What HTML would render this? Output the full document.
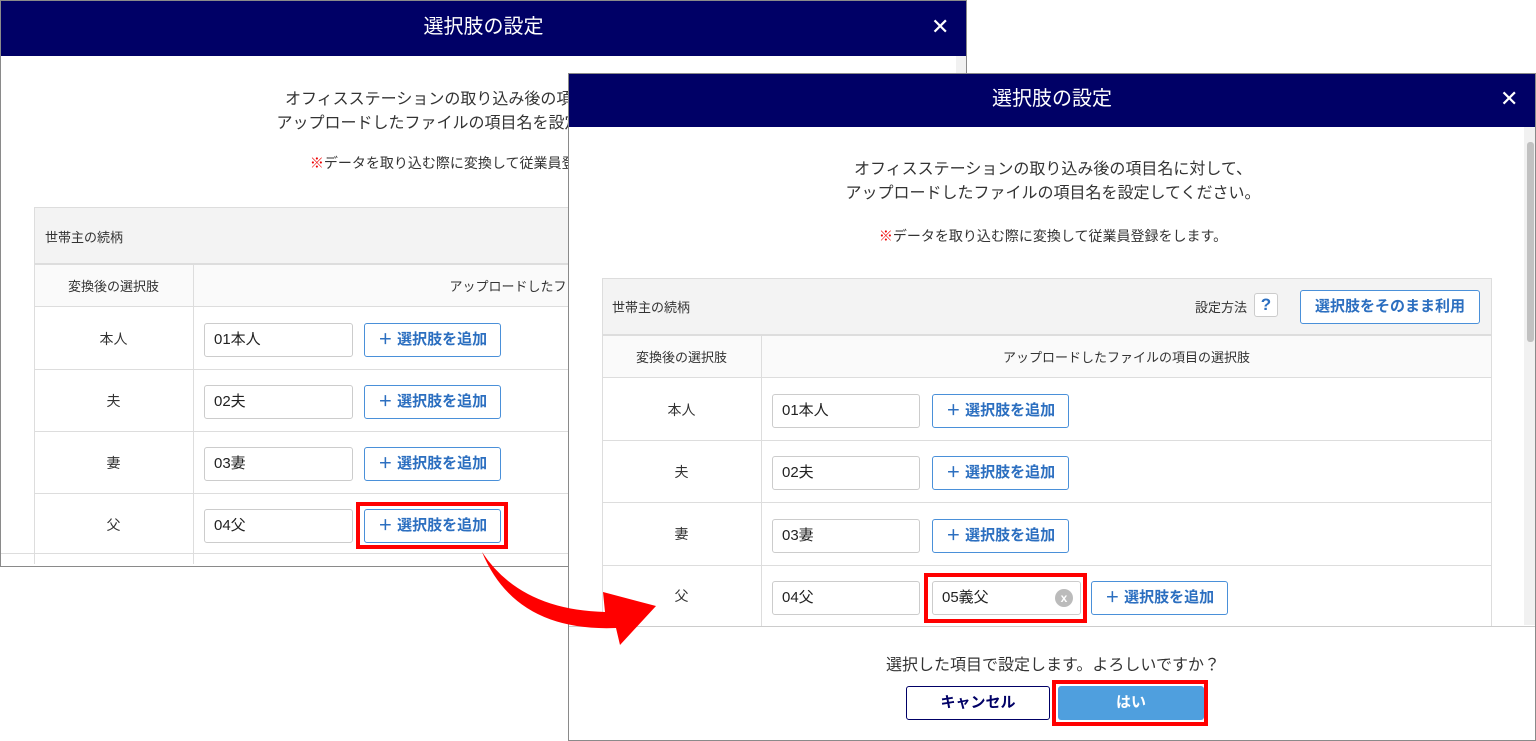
<!DOCTYPE html>
<html><head><meta charset="utf-8"><style>
*{box-sizing:border-box;margin:0;padding:0}
body{width:1536px;height:741px;background:#fff;position:relative;overflow:hidden;font-family:"Liberation Sans","Noto Sans CJK JP",sans-serif;color:#333}
.abs{position:absolute}
.dlg{position:absolute;background:#fff;border:1px solid #8a8a8a;overflow:hidden}
.hd{position:absolute;left:0;right:0;top:0;background:#000066;color:#fff;text-align:center;font-size:20px}
.x{position:absolute;color:#fff;font-size:22px}
.c{position:absolute;text-align:center;font-size:16px;color:#333;white-space:nowrap}
.inp{position:absolute;height:34px;border:1px solid #ccc;border-radius:3px;background:#fff;font-size:15px;line-height:32px;padding-left:9px;color:#222}
.btn{position:absolute;height:34px;border:1px solid #4a90d9;border-radius:3px;background:#fff;color:#2c6fc0;font-size:15px;font-weight:bold;line-height:32px;text-align:center}
.hl{position:absolute;background:#ddd}
.red{position:absolute;border:4px solid #f00}
</style></head><body>

<!-- left dialog -->
<div class="dlg" style="left:0;top:0;width:967px;height:567px">
 <div class="hd" style="height:55px;line-height:53px">選択肢の設定</div>
 <div class="x" style="left:930px;top:13px">✕</div>
 <div class="abs" style="left:955px;top:55px;width:12px;height:498px;background:#f1f1f1"></div>
 <div class="c" style="left:0;width:966px;top:87px;line-height:24px">オフィスステーションの取り込み後の項目名に対して、<br>アップロードしたファイルの項目名を設定してください。</div>
 <div class="c" style="left:0;width:966px;top:152px;font-size:14px"><span style="color:#e00">※</span>データを取り込む際に変換して従業員登録をします。</div>
 <div class="abs" style="left:33px;top:206px;width:930px;height:57px;background:#f3f3f3;border:1px solid #ddd"></div>
 <div class="c" style="left:44px;top:226px;font-size:13px">世帯主の続柄</div>
 <div class="abs" style="left:33px;top:263px;width:930px;height:43px;background:#fafafa;border:1px solid #ddd"></div>
 <div class="c" style="left:33px;width:159px;top:275px;font-size:13px">変換後の選択肢</div>
 <div class="c" style="left:192px;width:760px;top:275px;font-size:13px">アップロードしたファイルの項目の選択肢</div>
 <div class="hl" style="left:33px;top:263px;width:1px;height:300px"></div>
 <div class="hl" style="left:192px;top:263px;width:1px;height:300px"></div>
 <div class="hl" style="left:33px;top:368px;width:930px;height:1px"></div>
 <div class="hl" style="left:33px;top:430px;width:930px;height:1px"></div>
 <div class="hl" style="left:33px;top:492px;width:930px;height:1px"></div>
 <div class="hl" style="left:0;top:552px;width:967px;height:1px"></div>
 <div class="c" style="left:33px;width:159px;top:328px;font-size:14px">本人</div>
 <div class="c" style="left:33px;width:159px;top:390px;font-size:14px">夫</div>
 <div class="c" style="left:33px;width:159px;top:452px;font-size:14px">妻</div>
 <div class="c" style="left:33px;width:159px;top:514px;font-size:14px">父</div>
 <div class="inp" style="left:203px;top:322px;width:149px">01本人</div>
 <div class="inp" style="left:203px;top:384px;width:149px">02夫</div>
 <div class="inp" style="left:203px;top:446px;width:149px">03妻</div>
 <div class="inp" style="left:203px;top:508px;width:149px">04父</div>
 <div class="btn" style="left:363px;top:322px;width:137px">＋ 選択肢を追加</div>
 <div class="btn" style="left:363px;top:384px;width:137px">＋ 選択肢を追加</div>
 <div class="btn" style="left:363px;top:446px;width:137px">＋ 選択肢を追加</div>
 <div class="btn" style="left:363px;top:508px;width:137px">＋ 選択肢を追加</div>
</div>
<div class="red" style="left:356px;top:502px;width:152px;height:47px"></div>

<!-- right dialog -->
<div class="dlg" style="left:568px;top:73px;width:968px;height:668px">
 <div class="hd" style="height:53px;line-height:51px">選択肢の設定</div>
 <div class="x" style="left:931px;top:12px">✕</div>
 <div class="abs" style="left:955px;top:53px;width:12px;height:498px;background:#f1f1f1"></div>
 <div class="abs" style="left:958px;top:68px;width:7px;height:200px;background:#c1c1c1;border-radius:3px"></div>
 <div class="c" style="left:0;width:968px;top:84px;line-height:24px">オフィスステーションの取り込み後の項目名に対して、<br>アップロードしたファイルの項目名を設定してください。</div>
 <div class="c" style="left:0;width:968px;top:152px;font-size:14px"><span style="color:#e00">※</span>データを取り込む際に変換して従業員登録をします。</div>
 <div class="abs" style="left:33px;top:204px;width:890px;height:57px;background:#f3f3f3;border:1px solid #ddd"></div>
 <div class="c" style="left:43px;top:223px;font-size:13px">世帯主の続柄</div>
 <div class="c" style="left:626px;top:223px;font-size:13px">設定方法</div>
 <div class="abs" style="left:685px;top:219px;width:24px;height:24px;border:1px solid #ccc;border-radius:3px;background:#fff;color:#2c6fc0;font-weight:bold;font-size:17px;text-align:center;line-height:22px">?</div>
 <div class="btn" style="left:731px;top:216px;width:180px;height:34px">選択肢をそのまま利用</div>
 <div class="abs" style="left:33px;top:261px;width:890px;height:43px;background:#fafafa;border:1px solid #ddd"></div>
 <div class="c" style="left:33px;width:159px;top:273px;font-size:13px">変換後の選択肢</div>
 <div class="c" style="left:192px;width:731px;top:273px;font-size:13px">アップロードしたファイルの項目の選択肢</div>
 <div class="hl" style="left:33px;top:261px;width:1px;height:292px"></div>
 <div class="hl" style="left:192px;top:261px;width:1px;height:292px"></div>
 <div class="hl" style="left:922px;top:261px;width:1px;height:292px"></div>
 <div class="hl" style="left:33px;top:366px;width:890px;height:1px"></div>
 <div class="hl" style="left:33px;top:428px;width:890px;height:1px"></div>
 <div class="hl" style="left:33px;top:491px;width:890px;height:1px"></div>
 <div class="hl" style="left:0;top:552px;width:968px;height:1px;background:#ccc"></div>
 <div class="c" style="left:33px;width:159px;top:326px;font-size:14px">本人</div>
 <div class="c" style="left:33px;width:159px;top:388px;font-size:14px">夫</div>
 <div class="c" style="left:33px;width:159px;top:450px;font-size:14px">妻</div>
 <div class="c" style="left:33px;width:159px;top:512px;font-size:14px">父</div>
 <div class="inp" style="left:203px;top:320px;width:148px">01本人</div>
 <div class="inp" style="left:203px;top:382px;width:148px">02夫</div>
 <div class="inp" style="left:203px;top:445px;width:148px">03妻</div>
 <div class="inp" style="left:203px;top:507px;width:148px">04父</div>
 <div class="inp" style="left:363px;top:507px;width:149px">05義父</div>
 <div class="abs" style="left:486px;top:515px;width:18px;height:18px;border-radius:50%;background:#bbb;color:#fff;font-size:12px;text-align:center;line-height:18px;font-weight:bold">x</div>
 <div class="btn" style="left:363px;top:320px;width:137px">＋ 選択肢を追加</div>
 <div class="btn" style="left:363px;top:382px;width:137px">＋ 選択肢を追加</div>
 <div class="btn" style="left:363px;top:445px;width:137px">＋ 選択肢を追加</div>
 <div class="btn" style="left:522px;top:507px;width:137px">＋ 選択肢を追加</div>
 <div class="c" style="left:0;width:968px;top:577px;font-size:16px">選択した項目で設定します。よろしいですか？</div>
 <div class="abs" style="left:337px;top:612px;width:144px;height:34px;border:1px solid #000066;border-radius:3px;color:#000066;font-weight:bold;font-size:15px;text-align:center;line-height:32px">キャンセル</div>
 <div class="abs" style="left:489px;top:612px;width:146px;height:34px;background:#4f9fde;border-radius:3px;color:#fff;font-weight:bold;font-size:15px;text-align:center;line-height:34px">はい</div>
</div>
<div class="red" style="left:924px;top:573px;width:163px;height:50px"></div>
<div class="red" style="left:1052px;top:680px;width:156px;height:46px"></div>

<!-- arrow -->
<svg class="abs" style="left:0;top:0" width="1536" height="741">
 <path d="M482 552 Q520 610 605 612 L603 592 L656 606 L620 645 L616 628 Q515 632 482 552 Z" fill="#f00"/>
</svg>
</body></html>
